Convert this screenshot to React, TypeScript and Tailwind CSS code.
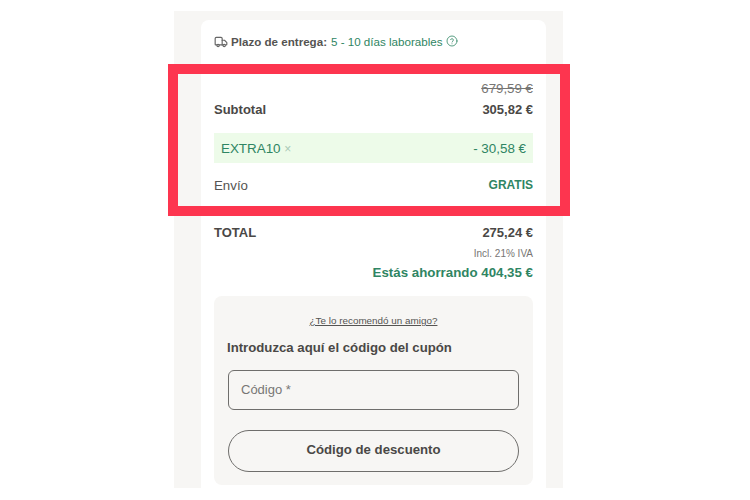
export default function App() {
  return (
    <div className="relative w-[750px] h-[500px] bg-white overflow-hidden text-[#4a4846] font-['Liberation_Sans',Arial,sans-serif]">
      <div className="ml-[174px] w-[389px] h-[477px] bg-[#f7f6f4] pl-[27px] pr-[17px] relative top-[11px] pt-[9px]">
        <div className="h-[468px] bg-white rounded-t-[8px] px-[13px]">
          <div className="h-[44px] flex items-center gap-[3px] text-[11.6px] leading-[16px]">
            <svg width="14" height="14" viewBox="0 0 24 24" fill="none" stroke="#666" strokeWidth="2" strokeLinecap="round" strokeLinejoin="round">
              <path d="M14 17V6a2 2 0 0 0-2-2H4a2 2 0 0 0-2 2v10a1 1 0 0 0 1 1h2" />
              <path d="M14 9h4l4 4v3a1 1 0 0 1-1 1h-1" />
              <path d="M9 17h6" />
              <circle cx="7" cy="18" r="2" />
              <circle cx="17.5" cy="18" r="2" />
            </svg>
            <span className="font-bold text-[#555452]">Plazo de entrega:</span>
            <span className="text-[#2f8563] ml-[1px]">5 - 10 días laborables</span>
            <svg className="-mt-[2px]" width="12" height="12" viewBox="0 0 24 24" fill="none" stroke="#2f8563" strokeWidth="1.6" strokeLinecap="round">
              <circle cx="12" cy="12" r="10" />
              <path d="M9.2 9.2a2.9 2.9 0 0 1 5.6 1c0 1.9-2.8 2.5-2.8 3.8" />
              <path d="M12 17.5h.01" />
            </svg>
          </div>
          <div className="pt-[17px] text-right text-[13.3px] leading-[16px] text-[#777674] line-through">679,59 €</div>
          <div className="mt-[5px] flex justify-between text-[13px] leading-[16px] font-bold">
            <span>Subtotal</span>
            <span>305,82 €</span>
          </div>
          <div className="mt-[15px] h-[30px] bg-[#edfbe9] px-[7px] pt-[2px] flex items-center justify-between text-[13.4px] text-[#2f8563]">
            <span>
              EXTRA10 <span className="text-[12px] text-[#a9c9b6]">×</span>
            </span>
            <span>- 30,58 €</span>
          </div>
          <div className="mt-[14px] flex justify-between items-center h-[16px]">
            <span className="text-[13.3px] text-[#555452] mt-[1px]">Envío</span>
            <span className="text-[12px] font-bold text-[#2f8563]">GRATIS</span>
          </div>
          <div className="mt-[32px] flex justify-between text-[13px] leading-[16px] font-bold">
            <span>TOTAL</span>
            <span>275,24 €</span>
          </div>
          <div className="mt-[8px] text-right text-[10px] leading-[10px] text-[#777674]">Incl. 21% IVA</div>
          <div className="mt-[6px] text-right text-[13.3px] leading-[16px] font-bold text-[#2f8563]">Estás ahorrando 404,35 €</div>
          <div className="mt-[15px] h-[189px] bg-[#f7f6f4] rounded-[8px] px-[14px] pt-[19px]">
            <div className="text-center text-[9.9px] leading-[12px] underline text-[#555452]">¿Te lo recomendó un amigo?</div>
            <div className="mt-[13px] -ml-[1px] text-[13.2px] leading-[16px] font-bold">Introduzca aquí el código del cupón</div>
            <div className="mt-[14px] h-[40px] border border-[#6f6e6c] rounded-[6px] pl-[12px] flex items-center text-[13px] text-[#777674]">Código *</div>
            <div className="mt-[20px] h-[42px] border border-[#6f6e6c] rounded-full flex items-center justify-center text-[13.2px] font-bold pb-[2px]">Código de descuento</div>
          </div>
        </div>
      </div>
      <div className="absolute left-[168px] top-[64px] w-[402px] h-[152px] border-[10px] border-[#fd354f]" />
    </div>
  );
}
